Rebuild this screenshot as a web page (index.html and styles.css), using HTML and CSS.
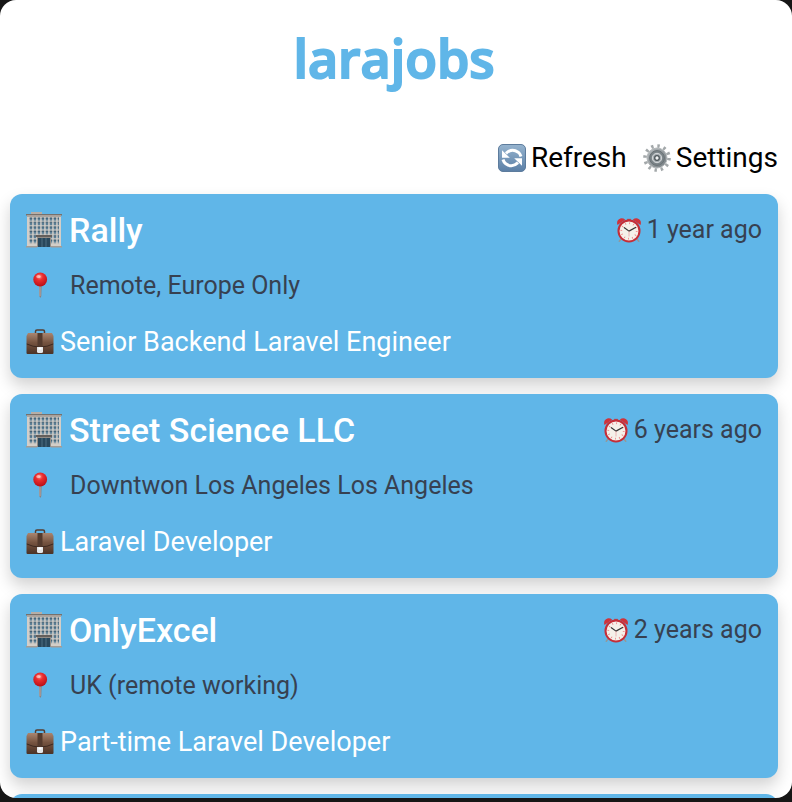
FILE: index.html
```html
<!DOCTYPE html>
<html lang="en">
<head>
<meta charset="utf-8">
<meta name="viewport" content="width=device-width, initial-scale=1">
<title>larajobs</title>
<link rel="stylesheet" href="styles.css">
</head>
<body>
<svg class="sprite" aria-hidden="true">
  <defs>
    <linearGradient id="gRefresh" x1="0" y1="0" x2="0" y2="1"><stop offset="0" stop-color="#96b4cf"/><stop offset="1" stop-color="#5b7fa6"/></linearGradient>
    <linearGradient id="gGear" x1="0" y1="0" x2="1" y2="1"><stop offset="0" stop-color="#b8bdc0"/><stop offset="1" stop-color="#747c80"/></linearGradient>
    <linearGradient id="gCase" x1="0" y1="0" x2="0" y2="1"><stop offset="0" stop-color="#a98570"/><stop offset=".45" stop-color="#775440"/><stop offset="1" stop-color="#4b3226"/></linearGradient>
    <radialGradient id="gPin" cx=".45" cy=".3" r=".7"><stop offset="0" stop-color="#ff8a80"/><stop offset=".35" stop-color="#ec2f30"/><stop offset="1" stop-color="#b80f18"/></radialGradient>
    <pattern id="windows" x="3" y="5" width="4" height="4.4" patternUnits="userSpaceOnUse"><rect width="4" height="4.4" fill="#d3cec8"/><rect x=".7" y=".6" width="2.5" height="3.1" fill="#5c8096"/><rect x=".7" y=".6" width="2.5" height="1" fill="#3c5a6e"/></pattern>
  </defs>
  <symbol id="building" viewBox="0 0 36 36">
    <path d="M5 0h11v3H5z" fill="#b5aea7"/>
    <path d="M1 3h34v32H1z" fill="#d3cec8"/>
    <path d="M3 5h30v26.400H3z" fill="url(#windows)"/>
    <path d="M0 2h36v1.500H0z" fill="#77716c"/>
    <path d="M1 3.500h34V5H1z" fill="#ada69f"/>
    <path d="M11 24h14v11H11z" fill="#948d86"/>
    <path d="M10 23h16v2H10z" fill="#655f5b"/>
    <path d="M12 26h12v9H12z" fill="#29485c"/>
    <path d="M16 26v9M20 26v9" stroke="#5f8194" stroke-width=".7"/>
    <path d="M0 34h11v1.500H0zM25 34h11v1.500H25z" fill="#a39c95"/>
  </symbol>
  <symbol id="pin" viewBox="0 0 28 28">
    <path d="M13 13h2.600l-.3 11-1 2-1-2z" fill="#8c7f7c"/>
    <path d="M14 14v10" stroke="#b5aaa8"/>
    <circle cx="14.200" cy="7.500" r="6.900" fill="url(#gPin)"/>
    <ellipse cx="12.500" cy="4.500" rx="2.300" ry="1.500" fill="#fff" opacity=".5"/>
  </symbol>
  <symbol id="briefcase" viewBox="0 0 28 28">
    <path d="M9.500 6V3.500Q9.500 2 11 2h6q1.500 0 1.500 1.500V6" fill="none" stroke="#563b2e" stroke-width="1.500"/>
    <path d="M2 5h24l1.500 3v17q0 1-1 1h-25q-1 0-1-1V8z" fill="url(#gCase)"/>
    <path d="M.8 16q6 3 13.200 3t13.200-3" fill="none" stroke="#3e291f"/>
    <path d="M11.500 5h5v13h-5z" fill="#543a2d"/>
    <path d="M11 19h6v4.500q0 1.500-1.500 1.500h-3Q11 25 11 23.500z" fill="#e5e6e8"/>
    <path d="M12.500 19.500h3v2h-3z" fill="#fff"/>
  </symbol>
  <symbol id="clock" viewBox="0 0 28 28">
    <path d="M6 23l-2.500 3M22 23l2.500 3" stroke="#949797" stroke-width="1.700" stroke-linecap="round"/>
    <path d="M1.500 8.500Q.3 4 3.200 2.300 6.500.3 10 2.900zM26.500 8.500q1.200-4.500-1.700-6.200-3.300-2-6.800.6z" fill="#cf333b"/>
    <path d="M12 2h4v2h-4z" fill="#b9454a"/>
    <circle cx="14" cy="15" r="11.300" fill="#f5f1ea" stroke="#c52e38" stroke-width="2.200"/>
    <circle cx="14" cy="15" r="8.300" fill="none" stroke="#ef7f80" stroke-width="1.900" stroke-dasharray=".9 3.446"/>
    <path d="M9 11.500l5 3.700 7-4" fill="none" stroke="#363636" stroke-width="1.300" stroke-linecap="round" stroke-linejoin="round"/>
    <path d="M14 15v6" stroke="#e99495" stroke-width=".7"/>
  </symbol>
  <symbol id="refresh" viewBox="0 0 28 28">
    <rect x=".5" y=".5" width="27" height="27" rx="4.500" fill="url(#gRefresh)" stroke="#5d7c9d"/>
    <path d="M8 9.300Q13.800 3.700 20.200 8.200 22.300 9.900 23 12.500M20 18.700Q14.200 24.300 7.800 19.800 5.700 18.100 5 15.500" fill="none" stroke="#fff" stroke-width="3"/>
    <path d="M4 6.200v7.600h7.800zM24 21.800v-7.600h-7.800z" fill="#fff"/>
  </symbol>
  <symbol id="gear" viewBox="0 0 28 28">
    <circle cx="14" cy="14" r="12" fill="none" stroke="#a3a8aa" stroke-width="3.600" stroke-dasharray="2.400 3.883"/>
    <circle cx="14" cy="14" r="10" fill="url(#gGear)" stroke="#b4b8ba"/>
    <circle cx="14" cy="14" r="7.400" fill="#7b8488" stroke="#697175"/>
    <circle cx="14" cy="14" r="4.700" fill="#a6adb1" stroke="#d7dadc"/>
    <circle cx="14" cy="14" r="2.300" fill="#f0f2f3" stroke="#4c5559" stroke-width="1.300"/>
  </symbol>
</svg>
<div class="app">
  <header class="header"><h1 class="logo">larajobs</h1></header>
  <nav class="toolbar" aria-label="Actions">
    <button class="action" type="button"><svg class="icon"><use href="#refresh"/></svg>Refresh</button>
    <button class="action" type="button"><svg class="icon"><use href="#gear"/></svg>Settings</button>
  </nav>
  <main class="jobs">
    <article class="job">
      <div class="row"><h2 class="company"><svg class="icon icon-large"><use href="#building"/></svg>Rally</h2><p class="posted"><svg class="icon icon-small"><use href="#clock"/></svg>1 year ago</p></div>
      <p class="row location"><svg class="icon"><use href="#pin"/></svg>Remote, Europe Only</p>
      <p class="row position"><svg class="icon"><use href="#briefcase"/></svg>Senior Backend Laravel Engineer</p>
    </article>
    <article class="job">
      <div class="row"><h2 class="company"><svg class="icon icon-large"><use href="#building"/></svg>Street Science LLC</h2><p class="posted"><svg class="icon icon-small"><use href="#clock"/></svg>6 years ago</p></div>
      <p class="row location"><svg class="icon"><use href="#pin"/></svg>Downtwon Los Angeles Los Angeles</p>
      <p class="row position"><svg class="icon"><use href="#briefcase"/></svg>Laravel Developer</p>
    </article>
    <article class="job">
      <div class="row"><h2 class="company"><svg class="icon icon-large"><use href="#building"/></svg>OnlyExcel</h2><p class="posted"><svg class="icon icon-small"><use href="#clock"/></svg>2 years ago</p></div>
      <p class="row location"><svg class="icon"><use href="#pin"/></svg>UK (remote working)</p>
      <p class="row position"><svg class="icon"><use href="#briefcase"/></svg>Part-time Laravel Developer</p>
    </article>
    <article class="job"></article>
  </main>
</div>
</body>
</html>
```
FILE: styles.css
```css
* { box-sizing: border-box; }
html { height: 100%; background: #161616; }
body {
  height: 100%;
  margin: 0;
  padding-bottom: 4px;
  font-family: Roboto, "Liberation Sans", sans-serif;
  color: #000;
}
h1, h2, p { margin: 0; font-weight: 400; }
.sprite { position: absolute; width: 0; height: 0; }
.app {
  height: 100%;
  overflow: hidden;
  padding: 0 14px 0 10px;
  border-radius: 16px;
  background: #fff;
}
.header { display: flex; justify-content: center; padding: 22px 0 34px; }
.logo {
  font-family: "Open Sans", sans-serif;
  font-size: 52px;
  line-height: 72px;
  font-weight: 600;
  color: #60b6e8;
  -webkit-text-stroke: 2px #60b6e8;
  stroke-linejoin: round;
}
.toolbar { display: flex; justify-content: flex-end; gap: 16px; padding: 10px 0 16px; }
.action {
  display: flex;
  align-items: center;
  gap: 5px;
  padding: 0;
  border: 0;
  background: none;
  color: inherit;
  font: 28px/40px Roboto, "Liberation Sans", sans-serif;
  cursor: pointer;
}
.icon { flex: none; width: 28px; height: 28px; }
.icon-large { width: 36px; height: 36px; }
.icon-small { width: 26px; height: 26px; }
.jobs { display: flex; flex-direction: column; gap: 16px; }
.job {
  display: flex;
  flex-direction: column;
  gap: 16px;
  flex: none;
  min-height: 184px;
  padding: 16px;
  border-radius: 12px;
  background: #60b6e8;
  box-shadow: 0 8px 16px rgba(0, 0, 0, .18);
}
.row { display: flex; align-items: center; line-height: 40px; }
.company {
  display: flex;
  align-items: center;
  flex: 1;
  gap: 7px;
  font-size: 34px;
  font-weight: 500;
  color: #fff;
}
.posted { display: flex; align-items: center; gap: 5px; font-size: 25px; color: #374151; }
.location { gap: 16px; font-size: 25px; color: #374151; }
.position { gap: 6px; font-size: 27px; color: #fff; }
```
